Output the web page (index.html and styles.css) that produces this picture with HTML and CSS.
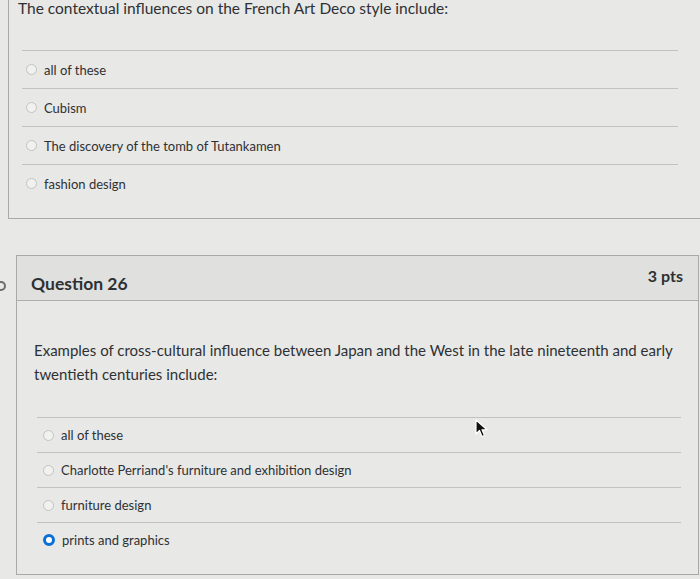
FILE: index.html
```html
<!DOCTYPE html>
<html>
<head>
<meta charset="utf-8">
<link rel="stylesheet" href="styles.css">
</head>
<body>
<div class="page">
  <section class="card card-prev">
    <p class="prev-title">The contextual influences on the French Art Deco style include:</p>
    <ul class="answers answers-prev">
      <li class="answer"><span class="radio"></span><span class="label">all of these</span></li>
      <li class="answer"><span class="radio"></span><span class="label">Cubism</span></li>
      <li class="answer"><span class="radio"></span><span class="label">The discovery of the tomb of Tutankamen</span></li>
      <li class="answer"><span class="radio"></span><span class="label">fashion design</span></li>
    </ul>
  </section>

  <div class="q-row">
    <span class="flag-mark"></span>
    <section class="card card-q">
      <header class="q-header">
        <h3 class="q-name">Question 26</h3>
        <span class="q-pts">3 pts</span>
      </header>
      <div class="q-body">
        <p class="q-text">Examples of cross-cultural influence between Japan and the West in the late nineteenth and early twentieth centuries include:</p>
        <ul class="answers answers-q">
          <li class="answer"><span class="radio"></span><span class="label">all of these</span></li>
          <li class="answer"><span class="radio"></span><span class="label">Charlotte Perriand's furniture and exhibition design</span></li>
          <li class="answer"><span class="radio"></span><span class="label">furniture design</span></li>
          <li class="answer"><span class="radio checked"></span><span class="label">prints and graphics</span></li>
        </ul>
      </div>
    </section>
  </div>

  <svg class="cursor" width="14" height="20" viewBox="0 0 14 20">
    <path d="M1 1 L1 15 L4.5 11.5 L7 17.5 L9.5 16.5 L7 10.8 L12 10.8 Z" fill="#111" stroke="#fff" stroke-width="1.2" stroke-linejoin="round"/>
  </svg>
</div>
</body>
</html>
```

FILE: styles.css
```css
* { box-sizing: border-box; }

html, body {
  margin: 0;
  padding: 0;
}

body {
  background: #e8e8e6;
  font-family: Lato, "Noto Sans", "Liberation Sans", sans-serif;
  color: #2e3134;
  width: 700px;
  height: 579px;
  overflow: hidden;
}

.page {
  position: relative;
  height: 579px;
}

.card {
  border: 1px solid #a9a9a7;
}

.card-prev {
  margin-left: 8px;
  border-top: none;
  border-right: none;
  padding: 0 0 16px 9px;
}

.prev-title {
  margin: 0;
  padding-top: 0;
  font-size: 15.5px;
  line-height: 17px;
  white-space: nowrap;
}

.answers {
  list-style: none;
  margin: 0;
  padding: 0;
}

.answers-prev {
  margin: 33px 22px 0 4px;
}

.answer {
  display: flex;
  align-items: center;
  gap: 7px;
  border-top: 1px solid #c2c2c0;
  padding-left: 4px;
  font-size: 13px;
}

.answers-prev .answer {
  height: 38px;
}

.radio {
  width: 11px;
  height: 11px;
  border-radius: 50%;
  border: 1px solid #c3c3c1;
  background: #f1f1ef;
  flex: none;
}

.radio.checked {
  width: 12px;
  height: 12px;
  border: 3.5px solid #0a6fd6;
  background: #ffffff;
}

.q-row {
  display: flex;
  align-items: flex-start;
  margin-top: 36px;
}

.flag-mark {
  width: 6px;
  height: 10px;
  margin-top: 26px;
  border: 2px solid #6d6d6d;
  border-left: none;
  border-radius: 0 6px 6px 0;
  flex: none;
}

.card-q {
  margin-left: 10px;
  width: 683px;
}

.q-header {
  height: 45px;
  background: #e0e0de;
  border-bottom: 1px solid #aeaeac;
  display: flex;
  align-items: center;
  justify-content: space-between;
  padding: 0 15px 0 14px;
}

.q-name {
  margin: 10px 0 0 0;
  font-size: 17.5px;
  font-weight: 700;
}

.q-pts {
  font-size: 16px;
  font-weight: 700;
  margin-top: -6px;
}

.q-body {
  padding: 37px 17px 17px 17px;
}

.q-text {
  margin: 0;
  font-size: 15px;
  line-height: 24px;
}

.answers-q {
  margin: 31px 0 0 3px;
}

.answers-q .answer {
  height: 35px;
  padding-left: 6px;
}

.cursor {
  position: absolute;
  left: 475px;
  top: 419px;
}
```
